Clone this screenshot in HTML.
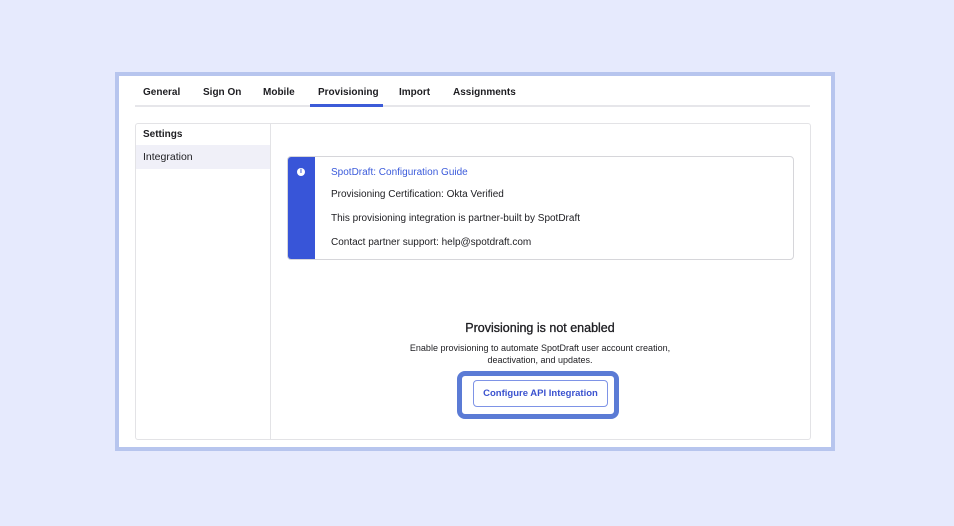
<!DOCTYPE html>
<html><head><style>
body{margin:0;width:954px;height:526px;background:#e6eafd;font-family:"Liberation Sans",sans-serif;position:relative;overflow:hidden}
.frame{position:absolute;left:115px;top:72px;width:712px;height:371px;border:4px solid #b7c5ee;background:#fff}
.tab{position:absolute;top:87px;font-size:10px;font-weight:bold;color:#1d1d21}
.abs{position:absolute}
</style></head><body>
<div class="frame"></div>
<div class="tab" style="left:143px">General</div>
<div class="tab" style="left:203px">Sign On</div>
<div class="tab" style="left:263px">Mobile</div>
<div class="tab" style="left:318px">Provisioning</div>
<div class="tab" style="left:399px">Import</div>
<div class="tab" style="left:453px">Assignments</div>
<div class="abs" style="left:135px;top:105px;width:675px;height:2px;background:#e6e6ea"></div>
<div class="abs" style="left:310px;top:104px;width:73px;height:3px;background:#3c5bd8"></div>
<div class="abs" style="left:135px;top:123px;width:674px;height:315px;border:1px solid #e3e3e6;border-radius:3px"></div>
<div class="abs" style="left:270px;top:124px;width:1px;height:315px;background:#e3e3e6"></div>
<div class="abs" style="left:136px;top:145px;width:134px;height:24px;background:#f0f0f8"></div>
<div class="abs" style="left:143px;top:129px;font-size:10px;font-weight:bold;color:#1d1d21">Settings</div>
<div class="abs" style="left:143px;top:151px;font-size:10.5px;color:#1d1d21">Integration</div>
<div class="abs" style="left:287px;top:156px;width:505px;height:102px;border:1px solid #d6d6da;border-radius:4px;overflow:hidden">
 <div style="position:absolute;left:0;top:0;width:27px;height:100%;background:#3855d8"></div>
 <div style="position:absolute;left:9px;top:11px;width:8px;height:8px;border-radius:50%;background:#fff;color:#3855d8;font-size:7px;font-weight:bold;text-align:center;line-height:8px">i</div>
</div>
<div class="abs" style="left:331px;top:167px;font-size:10px;color:#3b5bdb">SpotDraft: Configuration Guide</div>
<div class="abs" style="left:331px;top:189px;font-size:10px;color:#1d1d21">Provisioning Certification: Okta Verified</div>
<div class="abs" style="left:331px;top:213px;font-size:10px;color:#1d1d21">This provisioning integration is partner-built by SpotDraft</div>
<div class="abs" style="left:331px;top:237px;font-size:10px;color:#1d1d21">Contact partner support: help@spotdraft.com</div>
<div class="abs" style="left:340px;width:400px;top:321px;text-align:center;font-size:12.5px;color:#1d1d21;-webkit-text-stroke:0.3px #1d1d21">Provisioning is not enabled</div>
<div class="abs" style="left:340px;width:400px;top:342px;text-align:center;font-size:9px;line-height:12px;color:#1d1d21">Enable provisioning to automate SpotDraft user account creation,<br>deactivation, and updates.</div>
<div class="abs" style="left:457px;top:371px;width:152px;height:38px;border:5px solid #5b7bd5;border-radius:8px;background:#fff"></div>
<div class="abs" style="left:473px;top:380px;width:133px;height:25px;border:1px solid #7e93e6;border-radius:4px;text-align:center;line-height:26px;font-size:9.5px;font-weight:bold;color:#3b52cf">Configure API Integration</div>
</body></html>
